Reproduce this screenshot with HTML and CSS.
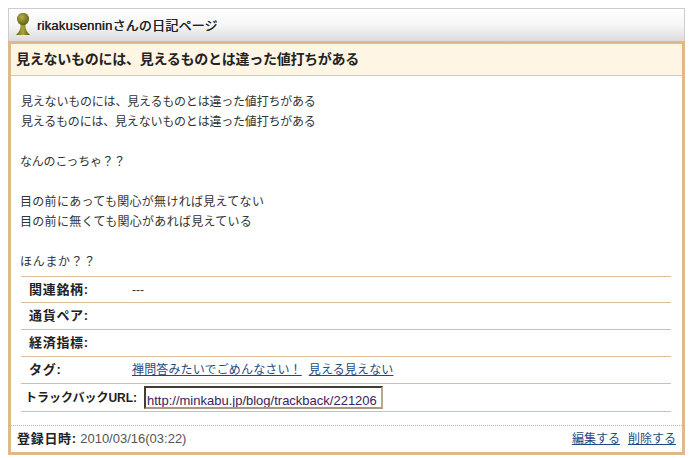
FILE: index.html
```html
<!DOCTYPE html>
<html lang="ja">
<head>
<meta charset="utf-8">
<title>rikakusenninさんの日記ページ</title>
<link rel="stylesheet" href="styles.css">
</head>
<body>
<div class="page-head">
  <svg class="avatar" width="17" height="24" viewBox="0 0 17 24">
    <defs>
      <radialGradient id="g" cx="40%" cy="35%" r="70%"><stop offset="0" stop-color="#b5b04a"/><stop offset="1" stop-color="#5c5a12"/></radialGradient>
      <linearGradient id="b" x1="0" y1="0" x2="1" y2="0"><stop offset="0" stop-color="#6b6a1a"/><stop offset=".5" stop-color="#aaa63a"/><stop offset="1" stop-color="#55540f"/></linearGradient>
    </defs>
    <path d="M4.5 11 C5 16 3 19 0 22 H14 C11 19 9 16 9.5 11Z" fill="url(#b)"/>
    <ellipse cx="7" cy="6" rx="6" ry="6.2" fill="url(#g)"/>
  </svg>
  <h1 class="page-title">rikakusenninさんの日記ページ</h1>
</div>
<div class="card">
  <h2 class="card-title">見えないものには、見えるものとは違った値打ちがある</h2>
  <div class="body-text">
    <p class="line in">見えないものには、見えるものとは違った値打ちがある</p>
    <p class="line in">見えるものには、見えないものとは違った値打ちがある</p>
    <p class="line gap">なんのこっちゃ？？</p>
    <p class="line gap wide">目の前にあっても関心が無ければ見えてない</p>
    <p class="line wide">目の前に無くても関心があれば見えている</p>
    <p class="line gap last">ほんまか？？</p>
  </div>
  <div class="meta">
    <div class="row"><span class="label">関連銘柄:</span><span class="value">---</span></div>
    <div class="row"><span class="label">通貨ペア:</span><span class="value"></span></div>
    <div class="row"><span class="label">経済指標:</span><span class="value"></span></div>
    <div class="row"><span class="label">タグ:</span><span class="value tags"><a href="#">禅問答みたいでごめんなさい！</a><a href="#">見える見えない</a></span></div>
    <div class="row url"><span class="label">トラックバックURL:</span><input class="tb" type="text" value="http://minkabu.jp/blog/trackback/221206"></div>
  </div>
  <div class="foot">
    <div><strong class="date-label">登録日時:</strong> <span class="date">2010/03/16(03:22)</span></div>
    <div class="actions"><a href="#">編集する</a><a href="#">削除する</a></div>
  </div>
</div>
</body>
</html>
```

FILE: styles.css
```css
html, body { margin: 0; padding: 0; background: #fff; }
body {
  padding: 8px 5px 0 8px;
  font: 12px/20px "Liberation Sans", "Noto Sans CJK JP", sans-serif;
  color: #333;
}
.page-head {
  display: flex;
  align-items: center;
  gap: 4px;
  height: 33px;
  box-sizing: border-box;
  padding-left: 7px;
  border: 1px solid #ccc;
  border-bottom: 0;
  background: linear-gradient(#fff, #f6f6f6 50%, #dcdcdc);
}
.avatar { flex: none; }
.page-title { margin: 0; padding-top: 2px; font-size: 13px; font-weight: 400; color: #222; text-shadow: .3px 0 0 #222; letter-spacing: .2px; }
.card { border: 3px solid #deba8a; background: #fff; }
.card-title {
  margin: 0;
  height: 32px;
  box-sizing: border-box;
  padding-left: 5px;
  font-size: 14px;
  font-weight: 700;
  line-height: 30px;
  letter-spacing: -.26px;
  background: #fff5e5;
  border-bottom: 1px solid #e0c8a0;
  color: #222;
}
.body-text { padding: 16px 0 0 9px; letter-spacing: -.2px; }
.line { margin: 0; height: 20px; }
.in { padding-left: 1px; }
.gap { margin-top: 20px; }
.wide { letter-spacing: .3px; }
.last { height: 24px; letter-spacing: .7px; }
.meta { margin: 0 11px 0 10px; border-top: 1px solid #d8bf98; }
.row { display: flex; align-items: center; height: 26px; border-bottom: 1px solid #d8bf98; }
.row:first-child { height: 25px; }
.row.url { height: 27px; }
.label { width: 111px; padding-left: 8px; box-sizing: border-box; font-size: 13px; font-weight: 700; color: #222; flex: none; letter-spacing: .7px; white-space: nowrap; }
.url .label { width: 123px; padding-left: 4px; font-size: 12px; letter-spacing: 0; }
.tags { display: flex; gap: 7px; letter-spacing: .15px; }
.value a, .actions a { color: #1f4a80; text-decoration: underline; }
.tb {
  width: 239px;
  height: 23px;
  box-sizing: border-box;
  margin: 0;
  padding: 5px 0 0 1px;
  border: 2px solid;
  border-color: #443e30 #b8ab8c #a89a7c #443e30;
  font: 13px "Liberation Sans", sans-serif;
  color: #402060;
  background: #fff;
}
.foot {
  display: flex;
  justify-content: space-between;
  align-items: center;
  margin-top: 13px;
  height: 26px;
  padding: 0 6px 0 6px;
  border-top: 1px dotted #c8b48c;
}
.date-label { color: #222; font-size: 13px; letter-spacing: .7px; }
.date { color: #555; font-size: 13px; }
.actions { display: flex; gap: 8px; }
```
